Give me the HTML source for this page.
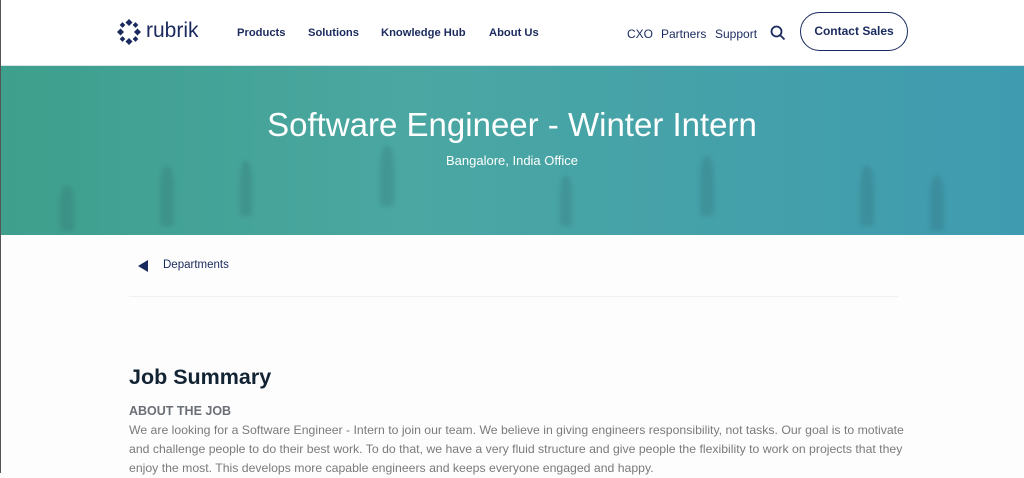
<!DOCTYPE html>
<html><head><meta charset="utf-8"><style>
*{margin:0;padding:0;box-sizing:border-box}
body{width:1024px;height:473px;overflow:hidden;background:#fdfdfd;font-family:"Liberation Sans",sans-serif;position:relative}
.nav{position:absolute;top:0;left:0;width:1024px;height:66px;background:#fff;border-bottom:1px solid #d8e4ea}
.a{position:absolute;color:#1a2a5e;font-size:12px}
.b{font-weight:bold;font-size:11.2px}
.banner{position:absolute;top:66px;left:0;width:1024px;height:169px;background:linear-gradient(90deg,#3e9f8c 0%,#4aa7a2 40%,#3f9bb0 100%);overflow:hidden}
.p{position:absolute;background:rgba(40,80,90,.18);border-radius:40% 40% 10% 10%;filter:blur(2px)}
h1{position:absolute;top:106px;left:0;width:1024px;text-align:center;color:#fff;font-weight:normal;font-size:33px}
.sub{position:absolute;top:153px;width:1024px;text-align:center;color:#fff;font-size:13px}
.txt{position:absolute;left:129px;color:#7a7a7a;font-size:12.25px;line-height:19px;width:775px}
</style></head><body>
<div class="nav">
<svg style="position:absolute;left:117px;top:19px" width="24" height="26" viewBox="0 0 24 26"><g fill="#1a2a5e"><rect x="9.5" y="1" width="5" height="5" transform="rotate(45 12 3.5)"/><rect x="9.5" y="20" width="5" height="5" transform="rotate(45 12 22.5)"/><rect x="1" y="10.5" width="5" height="5" transform="rotate(45 3.5 13)"/><rect x="18" y="10.5" width="5" height="5" transform="rotate(45 20.5 13)"/><rect x="3.5" y="4" width="4" height="4" transform="rotate(45 5.5 6)"/><rect x="16.5" y="4" width="4" height="4" transform="rotate(45 18.5 6)"/><rect x="3.5" y="18" width="4" height="4" transform="rotate(45 5.5 20)"/><rect x="16.5" y="18" width="4" height="4" transform="rotate(45 18.5 20)"/></g></svg>
<div class="a" style="left:146px;top:19px;font-size:21px">rubrik</div>
<div class="a b" style="left:237px;top:27px">Products</div>
<div class="a b" style="left:308px;top:27px">Solutions</div>
<div class="a b" style="left:381px;top:27px">Knowledge Hub</div>
<div class="a b" style="left:489px;top:27px">About Us</div>
<div class="a" style="left:627px;top:27px">CXO</div>
<div class="a" style="left:661px;top:27px">Partners</div>
<div class="a" style="left:715px;top:27px">Support</div>
<svg style="position:absolute;left:770px;top:25px" width="16" height="16" viewBox="0 0 16 16"><circle cx="6.5" cy="6.5" r="5" fill="none" stroke="#1a2a5e" stroke-width="1.8"/><path d="M10 10l4.5 4.5" stroke="#1a2a5e" stroke-width="1.8"/></svg>
<div style="position:absolute;left:800px;top:12px;width:108px;height:39px;border:1.5px solid #1a2a5e;border-radius:20px;color:#1a2a5e;font-weight:bold;font-size:12px;text-align:center;line-height:36px">Contact Sales</div>
</div>
<div class="banner">
<div class="p" style="left:160px;top:100px;width:14px;height:60px"></div>
<div class="p" style="left:240px;top:95px;width:12px;height:55px"></div>
<div class="p" style="left:380px;top:80px;width:14px;height:60px"></div>
<div class="p" style="left:560px;top:110px;width:12px;height:50px"></div>
<div class="p" style="left:700px;top:90px;width:14px;height:60px"></div>
<div class="p" style="left:860px;top:100px;width:14px;height:60px"></div>
<div class="p" style="left:930px;top:110px;width:14px;height:55px"></div>
<div class="p" style="left:60px;top:120px;width:14px;height:45px"></div>
</div>
<div style="position:absolute;left:0;top:0;width:1px;height:473px;background:#555"></div>
<h1>Software Engineer - Winter Intern</h1>
<div class="sub">Bangalore, India Office</div>
<div style="position:absolute;left:138px;top:260px;width:0;height:0;border-top:6px solid transparent;border-bottom:6px solid transparent;border-right:10px solid #1a2a5e"></div>
<div class="a" style="left:163px;top:259px;font-size:11.5px">Departments</div>
<div style="position:absolute;left:129px;top:296px;width:769px;height:1px;background:#eef1f4"></div>
<div style="position:absolute;left:129px;top:365px;font-size:21.5px;font-weight:bold;color:#122333">Job Summary</div>
<div style="position:absolute;left:129px;top:404px;font-size:12.5px;font-weight:bold;color:#6a6f75">ABOUT THE JOB</div>
<div class="txt" style="top:421px">We are looking for a Software Engineer - Intern to join our team. We believe in giving engineers responsibility, not tasks. Our goal is to motivate and challenge people to do their best work. To do that, we have a very fluid structure and give people the flexibility to work on projects that they enjoy the most. This develops more capable engineers and keeps everyone engaged and happy.</div>
</body></html>
